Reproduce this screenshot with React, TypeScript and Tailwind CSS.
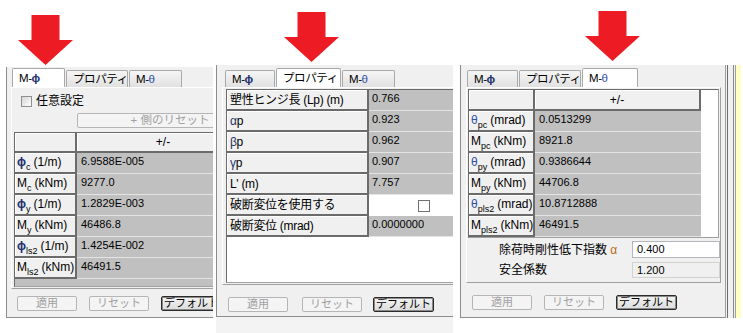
import type { ReactNode } from "react";

const RAISED =
  "border-b-2 border-r-2 border-[#6b6b6b] bg-[#f0f0f0] shadow-[inset_1px_1px_0_#ffffff]";

function Arrow() {
  return (
    <svg width="55" height="50" viewBox="0 0 55 50">
      <path d="M13.5 0H41.5V25H55L27.5 50L0 25H13.5Z" fill="#ed1c24" />
    </svg>
  );
}

function Sub({ children }: { children: ReactNode }) {
  return <span className="relative top-[3px] mr-[3px] text-[9px] leading-none">{children}</span>;
}

function Phi() {
  return <span className="font-bold text-[#23336e]">ϕ</span>;
}

function Theta() {
  return <span className="text-[#2d4fa5]">θ</span>;
}

function Tab({
  children,
  active,
  className,
}: {
  children: ReactNode;
  active?: boolean;
  className: string;
}) {
  return (
    <div
      className={`${className} flex shrink-0 items-start overflow-hidden whitespace-nowrap rounded-t-[2px] border border-b-0 border-[#a9a9a9] pl-[6px] text-[11.5px] leading-[16px] tracking-[-0.4px] ${
        active ? "h-[19px] bg-white pt-[1px]" : "h-[17px] bg-linear-to-b from-[#f5f5f5] to-[#e1e1e1]"
      }`}
    >
      {children}
    </div>
  );
}

function Btn({ children, primary, className = "" }: { children: ReactNode; primary?: boolean; className?: string }) {
  return (
    <button
      type="button"
      className={`${className} flex h-[15px] shrink-0 items-center justify-center whitespace-nowrap rounded-[2px] border text-[11px] leading-none ${
        primary
          ? "w-[61px] border-[#2b2b2b] bg-linear-to-b from-[#f3f3f3] to-[#dcdcdc] text-black shadow-[inset_0_0_0_1px_#8a8a8a]"
          : "w-[60px] border-[#b5b5b5] bg-[#f4f4f4] text-[#a0a0a0]"
      }`}
    >
      {children}
    </button>
  );
}

function Footer({ className }: { className: string }) {
  return (
    <div className={`${className} flex shrink-0`}>
      <Btn>適用</Btn>
      <Btn className="ml-[12px]">リセット</Btn>
      <Btn primary className="ml-[12px]">
        デフォルト
      </Btn>
    </div>
  );
}

const p1Rows: [ReactNode, string][] = [
  [<><Phi /><Sub>c</Sub>(1/m)</>, "6.9588E-005"],
  [<>M<Sub>c</Sub>(kNm)</>, "9277.0"],
  [<><Phi /><Sub>y</Sub>(1/m)</>, "1.2829E-003"],
  [<>M<Sub>y</Sub>(kNm)</>, "46486.8"],
  [<><Phi /><Sub>ls2</Sub>(1/m)</>, "1.4254E-002"],
  [<>M<Sub>ls2</Sub>(kNm)</>, "46491.5"],
];

const p2Rows: [ReactNode, string | null][] = [
  ["塑性ヒンジ長 (Lp) (m)", "0.766"],
  [<><span className="text-[#23336e]">α</span>p</>, "0.923"],
  [<><span className="text-[#23336e]">β</span>p</>, "0.962"],
  [<><span className="text-[#23336e]">γ</span>p</>, "0.907"],
  ["L' (m)", "7.757"],
  ["破断変位を使用する", null],
  ["破断変位 (mrad)", "0.0000000"],
];

const p3Rows: [ReactNode, string][] = [
  [<><Theta /><Sub>pc</Sub>(mrad)</>, "0.0513299"],
  [<>M<Sub>pc</Sub>(kNm)</>, "8921.8"],
  [<><Theta /><Sub>py</Sub>(mrad)</>, "0.9386644"],
  [<>M<Sub>py</Sub>(kNm)</>, "44706.8"],
  [<><Theta /><Sub>pls2</Sub>(mrad)</>, "10.8712888"],
  [<>M<Sub>pls2</Sub>(kNm)</>, "46491.5"],
];

export default function App() {
  return (
    <div className="flex h-[333px] w-[743px] overflow-hidden bg-white font-['Liberation_Sans','Noto_Sans_CJK_JP',sans-serif] text-black">
      {/* M-phi tab */}
      <div className="ml-[6px] flex w-[207px] shrink-0 flex-col">
        <div className="h-[67px] shrink-0 pl-[12px] pt-[15px]">
          <Arrow />
        </div>
        <div className="flex h-[251px] shrink-0 flex-col overflow-hidden border-b border-l border-[#8c8c8c] bg-[#f0f0f0]">
          <div className="flex h-[20px] shrink-0 items-end gap-[1px] pl-[5px]">
            <Tab active className="w-[53px]">
              M-<Phi />
            </Tab>
            <Tab className="w-[62px]">プロパティ</Tab>
            <Tab className="w-[53px]">
              M-<Theta />
            </Tab>
          </div>
          <div className="ml-[4px] h-[202px] w-[240px] shrink-0 border border-[#a0a0a0] border-l-white border-t-white">
            <div className="mt-[7px] flex h-[13px] items-center pl-[9px]">
              <div className="h-[11px] w-[11px] border border-[#8f8f8f] bg-linear-to-br from-[#d6d6d6] to-white" />
              <span className="ml-[4px] whitespace-nowrap text-[12px] leading-[13px]">任意設定</span>
            </div>
            <div className="ml-[65px] mt-[5px] flex h-[15px] w-[186px] items-center justify-center whitespace-nowrap rounded-[2px] border border-[#b5b5b5] bg-[#f4f4f4] text-[11.5px] leading-none text-[#a0a0a0]">
              + 側のリセット
            </div>
            <div className="ml-[2px] mt-[4px] flex h-[155px] w-[250px] flex-col border border-r-0 border-[#6b6b6b] border-b-[#a0a0a0] bg-[#c0c0c0]">
              <div className="flex h-[20px] shrink-0">
                <div className={`${RAISED} w-[62px]`} />
                <div className={`${RAISED} flex w-[174px] items-center justify-center text-[12px]`}>+/-</div>
              </div>
              {p1Rows.map(([label, value], i) => (
                <div key={i} className="flex h-[21px] shrink-0">
                  <div className={`${RAISED} flex w-[62px] items-end pb-[3px] pl-[2px] text-[12px] leading-[13px] whitespace-nowrap`}>
                    {label}
                  </div>
                  <div className="flex-1 border-b border-[#e4e4e4] pl-[4px] pt-[2px] text-[11px] leading-[13px]">{value}</div>
                </div>
              ))}
            </div>
          </div>
          <Footer className="mt-[7px] pl-[10px]" />
        </div>
      </div>

      {/* property tab */}
      <div className="ml-[3px] flex w-[237px] shrink-0 flex-col">
        <div className="h-[65px] shrink-0 pl-[68px] pt-[12px]">
          <Arrow />
        </div>
        <div className="flex h-[252px] shrink-0 flex-col overflow-hidden border-b border-l border-[#8c8c8c] bg-[#f0f0f0]">
          <div className="flex h-[22px] shrink-0 items-end gap-[1px] pl-[8px]">
            <Tab className="w-[50px]">
              M-<Phi />
            </Tab>
            <Tab active className="w-[65px]">
              プロパティ
            </Tab>
            <Tab className="w-[53px]">
              M-<Theta />
            </Tab>
          </div>
          <div className="ml-[5px] h-[198px] w-[240px] shrink-0 border border-[#a0a0a0] border-l-white border-t-white pl-[3px] pt-[1px]">
            <div className="flex h-[194px] w-[240px] flex-col border border-r-0 border-[#6b6b6b] border-b-[#a0a0a0] bg-white">
              {p2Rows.map(([label, value], i) => (
                <div key={i} className="flex h-[21px] shrink-0">
                  <div className={`${RAISED} flex w-[142px] items-center overflow-hidden pl-[3px] pt-[1px] text-[12px] leading-[13px] tracking-[-0.3px] whitespace-nowrap`}>
                    {label}
                  </div>
                  {value === null ? (
                    <div className="flex-1 bg-white pl-[49px] pt-[5px]">
                      <div className="h-[12px] w-[12px] border border-[#707070] bg-white" />
                    </div>
                  ) : (
                    <div className="flex-1 border-b border-[#e4e4e4] bg-[#c0c0c0] pl-[3px] pt-[2px] text-[11px] leading-[13px]">
                      {value}
                    </div>
                  )}
                </div>
              ))}
            </div>
          </div>
          <div className="mt-[12px] flex shrink-0 pl-[11px]">
            <Btn>適用</Btn>
            <Btn className="ml-[14px]">リセット</Btn>
            <Btn primary className="ml-[11px]">
              デフォルト
            </Btn>
          </div>
        </div>
        <div className="h-[16px] shrink-0 bg-[#f3f3f3]" />
      </div>

      {/* M-theta tab */}
      <div className="ml-[7px] flex w-[283px] shrink-0 flex-col">
        <div className="h-[65px] shrink-0 pl-[125px] pt-[11px]">
          <Arrow />
        </div>
        <div className="flex h-[253px] shrink-0">
          <div className="flex w-[265px] shrink-0 flex-col border-b border-l border-[#8c8c8c] bg-[#f0f0f0]">
            <div className="flex h-[22px] shrink-0 items-end gap-[1px] pl-[6px]">
              <Tab className="w-[51px]">
                M-<Phi />
              </Tab>
              <Tab className="w-[62px]">プロパティ</Tab>
              <Tab active className="w-[56px]">
                M-<Theta />
              </Tab>
            </div>
            <div className="ml-[5px] h-[196px] w-[255px] shrink-0 border border-[#a0a0a0] border-l-white border-t-white pl-[1px] pt-[1px]">
              <div className="flex h-[149px] w-[251px] flex-col border border-[#6b6b6b] border-b-[#a0a0a0] border-r-[#a0a0a0] bg-white">
                <div className="flex h-[21px] shrink-0">
                  <div className={`${RAISED} w-[66px]`} />
                  <div className={`${RAISED} flex w-[166px] items-center justify-center text-[12px]`}>+/-</div>
                </div>
                {p3Rows.map(([label, value], i) => (
                  <div key={i} className="flex h-[21px] shrink-0">
                    <div className={`${RAISED} flex w-[66px] items-end overflow-hidden pb-[3px] pl-[2px] text-[12px] leading-[13px] whitespace-nowrap`}>
                      {label}
                    </div>
                    <div className="w-[166px] border-b border-[#e4e4e4] bg-[#c0c0c0] pl-[4px] pt-[2px] text-[11px] leading-[13px]">
                      {value}
                    </div>
                  </div>
                ))}
              </div>
              <div className="mt-[3px] flex h-[17px] items-center">
                <div className="w-[164px] whitespace-nowrap pl-[31px] text-[12px] leading-none">
                  除荷時剛性低下指数 <span className="text-[#b86a1c]">α</span>
                </div>
                <div className="flex h-[17px] w-[88px] items-center border border-[#b4b6bb] bg-white pl-[4px] text-[11px]">
                  0.400
                </div>
              </div>
              <div className="mt-[4px] flex h-[16px] items-center">
                <div className="w-[164px] pl-[31px] text-[12px] leading-none">安全係数</div>
                <div className="flex h-[16px] w-[88px] items-center border border-[#d2d2d2] bg-[#f0f0f0] pl-[4px] text-[11px]">
                  1.200
                </div>
              </div>
            </div>
            <Footer className="mt-[12px] pl-[11px]" />
          </div>
          <div className="flex shrink-0">
            <div className="w-[1px] bg-[#a0a0a0]" />
            <div className="w-[1px] bg-[#f0f0f0]" />
            <div className="w-[1px] bg-[#6e6e6e]" />
            <div className="w-[5px] bg-[#f0f0f0]" />
            <div className="w-[1px] bg-[#8a8a8a]" />
            <div className="w-[1px] bg-[#f0f0f0]" />
            <div className="w-[1px] bg-[#a0a0a0]" />
            <div className="w-[5px] bg-[#ffffc4]" />
          </div>
        </div>
      </div>
    </div>
  );
}
